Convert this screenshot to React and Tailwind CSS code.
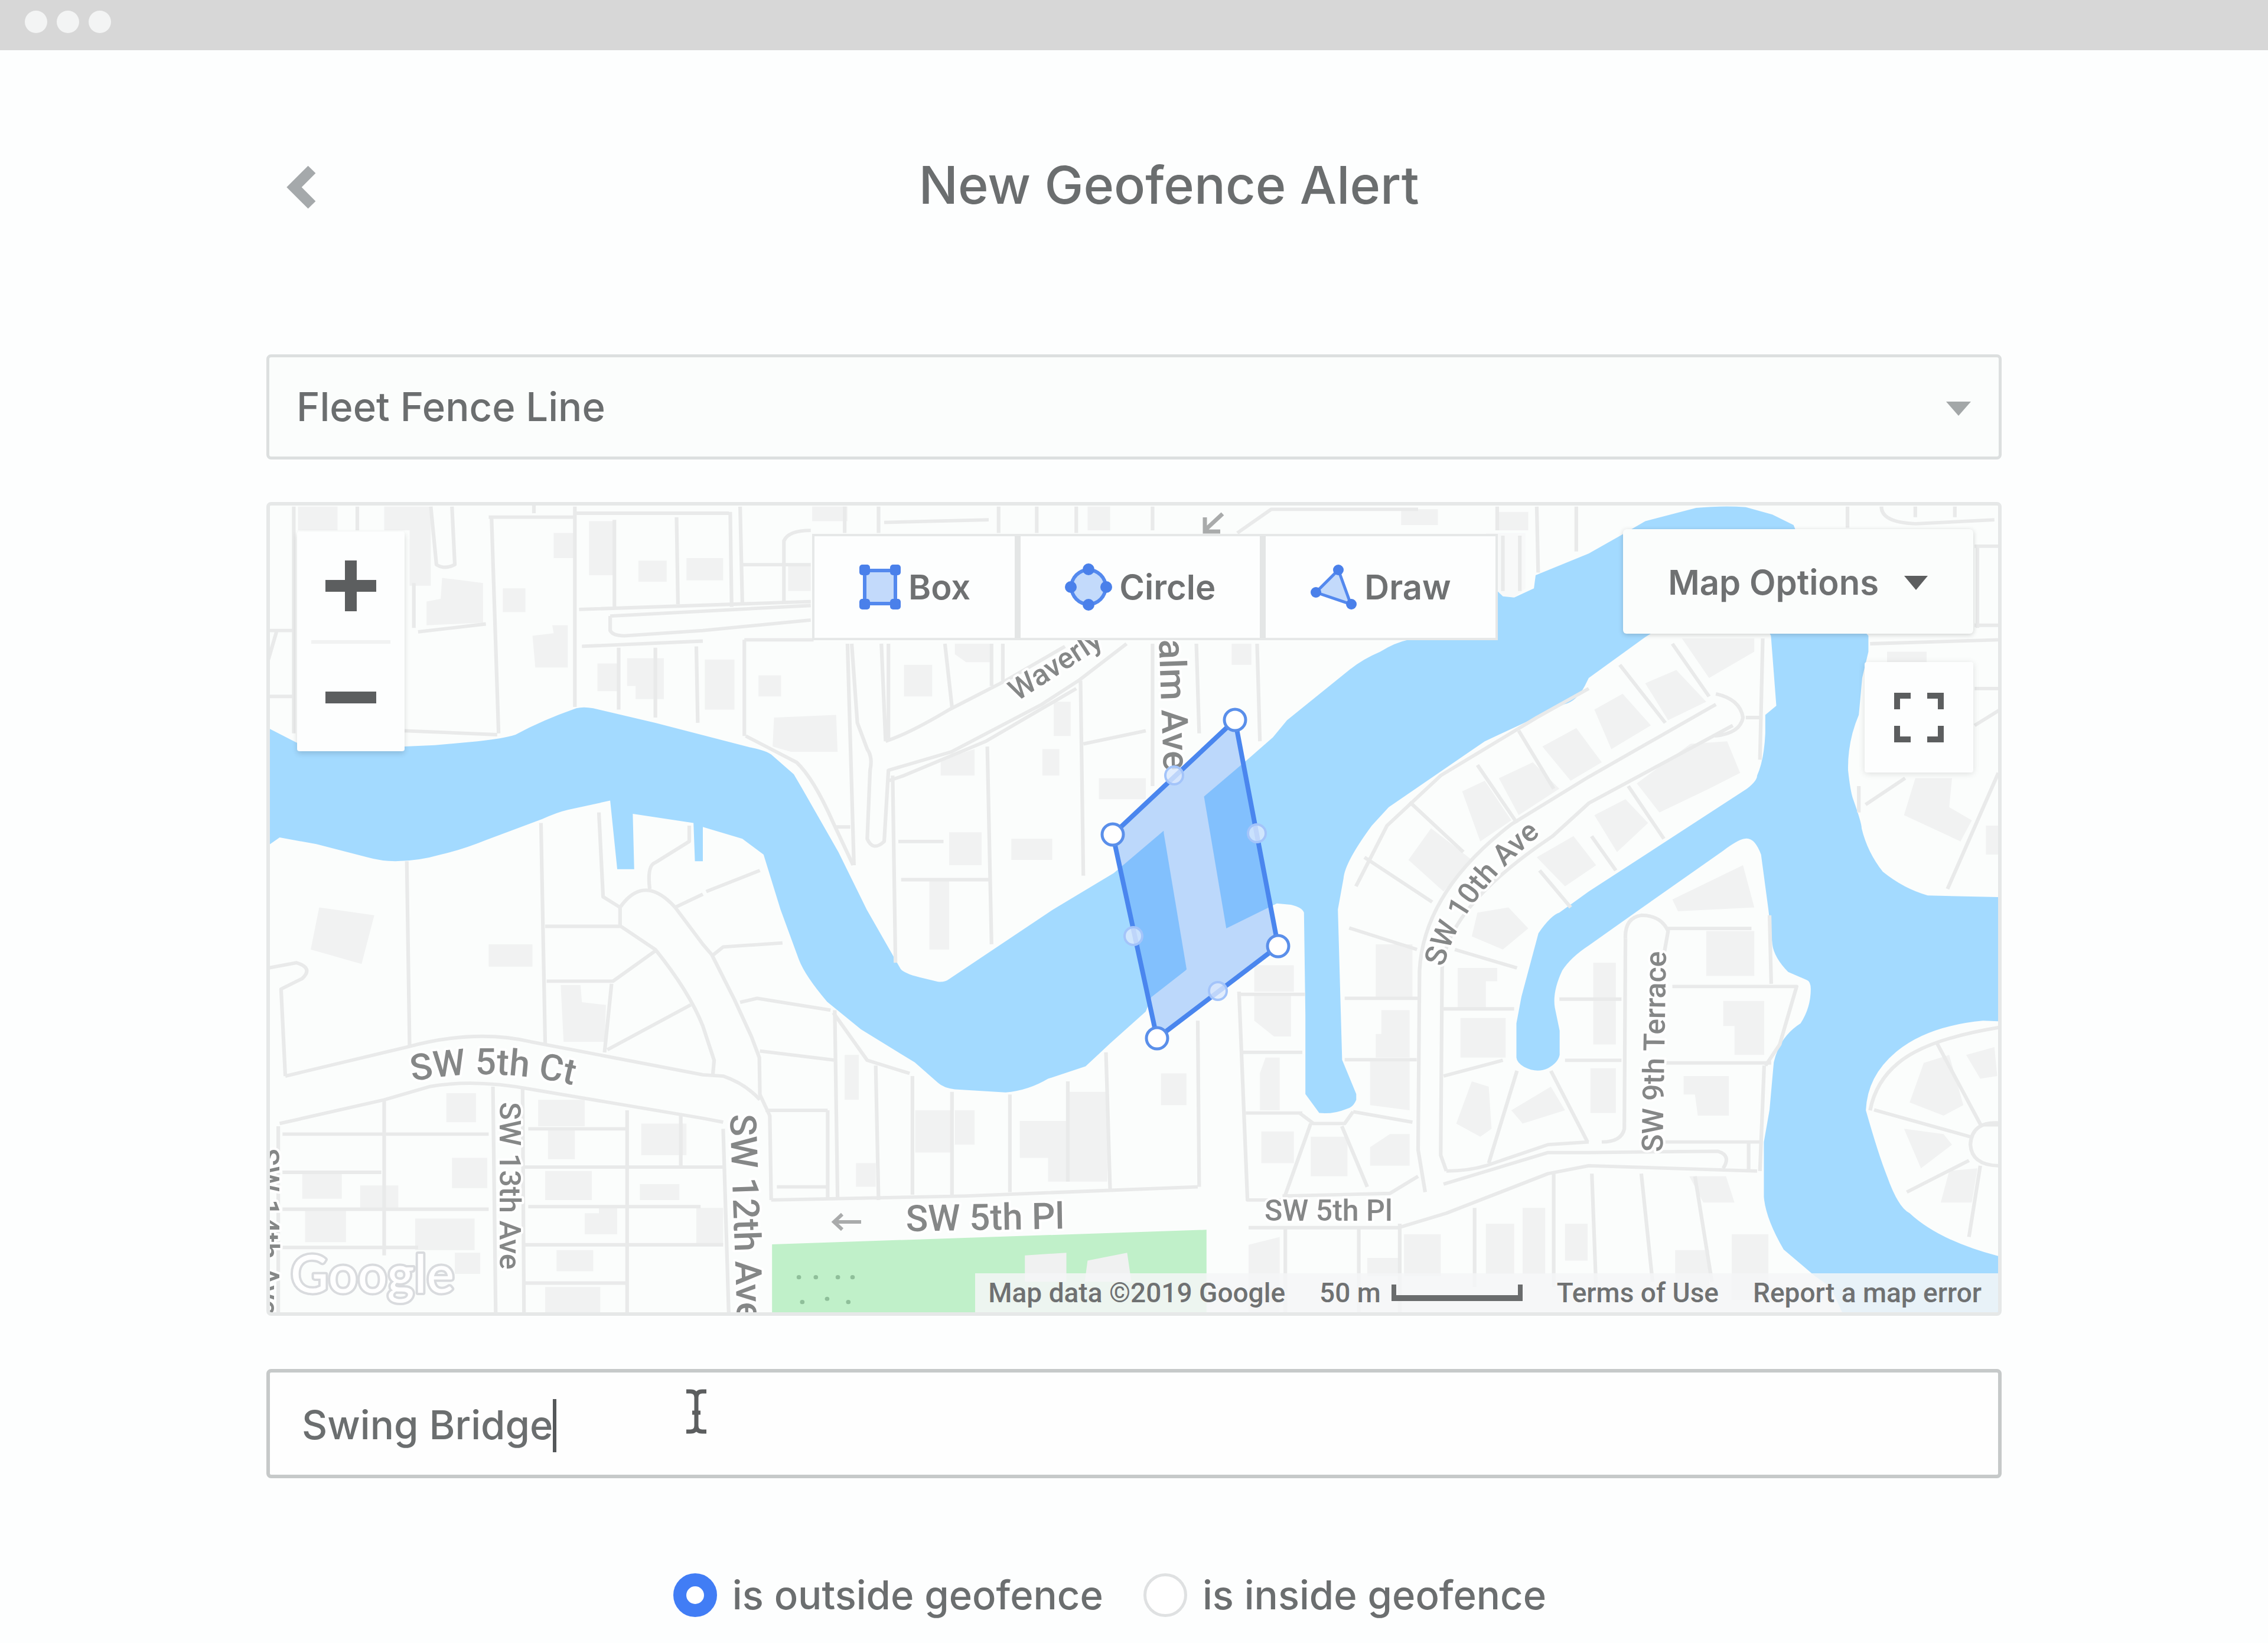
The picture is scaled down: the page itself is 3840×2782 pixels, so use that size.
import React from "react";

const WATER =
  "M0 870L30 880L130 935Q300 960 512 950L620 945L770 930Q860 920 905 905Q1000 850 1120 805Q1145 798 1180 805L1400 860L1743 955Q1790 965 1810 980L1890 1055L1920 1110L2048 1350L2148 1568L2268 1793Q2280 1810 2335 1825L2400 1842Q2425 1845 2440 1832L2808 1568L3023 1430L3506 990L3586 915L3636 850L3856 660Q3900 620 3966 590Q4020 555 4066 545L4250 440L4361 340L4400 380L4440 385L4510 350L4516 300L4704 218L4824 145L4904 95L5084 45Q5180 35 5260 42L5354 70L5429 110L5500 300L5694 530L5694 590L5672 690L5660 830Q5620 930 5622 1040Q5630 1120 5640 1150Q5670 1240 5670 1260Q5690 1350 5745 1425Q5820 1490 5904 1515L6180 1522V3140H5620L5560 3000L5504 2958L5394 2858Q5330 2740 5324 2658V2450L5344 2328L5359 2148Q5380 2050 5454 2000Q5490 1940 5490 1870Q5490 1840 5475 1835L5410 1805Q5360 1750 5354 1700L5340 1568L5314 1360Q5290 1290 5254 1300Q5230 1305 5180 1345L4884 1568L4704 1705Q4640 1750 4610 1800Q4575 1880 4584 1940L4601 2028V2120Q4595 2150 4560 2170Q4520 2190 4475 2165Q4450 2150 4448 2130V2000L4466 1898L4526 1658Q4570 1590 4600 1580L4704 1500L5264 1110Q5300 1080 5300 1060Q5325 1000 5329 900V830L5368 795L5349 530L5300 430L5000 470L4904 535L4704 690L4690 720Q4660 780 4616 790L4336 930L3996 1180L3936 1250Q3840 1390 3836 1450L3816 1568L3831 2138L3881 2268V2290Q3870 2320 3845 2325Q3800 2345 3750 2340L3701 2268V1968L3696 1580Q3690 1560 3650 1550L3600 1545L3421 1640L3276 1800L3156 1900L3136 1955L3008 2078L2923 2163L2790 2210Q2720 2255 2640 2262L2460 2250Q2420 2245 2400 2225L2318 2148L2128 2023L2008 1918Q1930 1820 1908 1758L1843 1568L1783 1360L1708 1300L1568 1255V1385H1540L1535 1240L1320 1205L1325 1415H1265L1240 1155L1090 1190Q1050 1200 1000 1225L800 1305Q720 1340 640 1360Q560 1385 480 1385Q430 1385 380 1370L200 1320L70 1295L30 1325L0 1350Z";

const ISLAND =
  "M6180 1993L6100 1990Q5900 2010 5790 2110Q5690 2200 5685 2330Q5730 2500 5760 2580Q5800 2700 5840 2720Q5950 2830 6180 2890Z";

const PARCELS = [
  // north-west blocks
  "M810 80H1110M820 80L845 900M1115 40V800M970 30V65M1115 65H1660M1255 90V420M1475 80L1480 410M1130 430L1950 400",
  "M1240 455L1950 415M1240 455V510Q1250 530 1290 530L1568 510L1950 470M1140 570L1568 550M1270 575V810M1400 575V840M1545 570L1550 860",
  "M512 890L840 905M605 40L625 260Q655 280 690 260L680 40M560 515L800 485M345 40V130M30 510H115M30 620L60 510M120 40V900M545 330V500M30 760H120",
  // south-west bank
  "M520 1385L530 2088M995 1240L1010 2080M1200 1200L1215 1520L1275 1560Q1360 1430 1470 1560M1380 1490Q1370 1400 1400 1390L1520 1310V1250M1470 1560L1568 1510",
  "M1275 1560V1630L1400 1720Q1520 1880 1568 2010L1608 2140L1603 2200M1470 1560L1568 1700L1600 1740L1680 1910L1740 2050L1768 2130L1770 2270L1805 2350L1810 2670",
  "M1010 1632H1275M1400 1725L1250 1840H1015M1245 1850L1220 2110M1525 1930L1230 2100M1605 1740L1640 1710L1850 1695M1700 1920L1760 1905L2020 1950M1770 2105L2040 2140M1790 2330H2010M1830 2620H2010M2035 1950L2045 2660M2010 2330V2660M1580 1500L1770 1420",
  "M90 2200L520 2090Q760 2020 960 2070L1568 2195L1640 2200Q1720 2230 1770 2290M70 2380L440 2290L600 2240Q760 2210 960 2250L1568 2360L1640 2375M90 2200L75 1870L150 1830Q190 1790 130 1770L30 1790M65 2390V3110",
  "M440 2290V2880M80 2420H810M80 2565H430M80 2705H810M80 2850H560M825 2240L835 3110M930 2240L935 3110M950 2400H1300M930 2545H1640M950 2695H1560M930 2840H1640M940 2985H1300M1300 2330V3110M1490 2350V2540M1640 2400L1660 3110",
  // Waverly
  "M1665 60L1670 420M1700 40L1708 410M1708 260H1950M1855 410V170Q1870 130 1950 130M2070 40V140M2190 40V140M2210 100L2580 90M2615 40V140M2750 40V140M2890 40V140M1715 545V910M1715 545H1960",
  "M2095 560L2115 860L2150 960Q2170 990 2160 1040L2150 1300Q2170 1350 2210 1310L2225 1040L2448 970L2768 790L2898 700L3068 560M2080 560L2103 1400M2200 560L2215 930M2225 560V920M2425 560L2450 800M2590 560V720M2630 560V700M2215 930Q2300 900 2440 810L2640 700L2850 570M2225 1080L2280 1060L2570 930L2890 730",
  "M2240 1060L2250 1770M2575 950L2590 1700M2905 700L2915 1440M2260 1310H2420M2270 1455H2590M2915 940L3136 890M1720 910L1900 1010Q1960 1070 2030 1240L2100 1400M2040 1255H2090",
  // south bank
  "M2180 2160L2190 2670M2310 2200V2650M2450 2260V2650M2655 2270V2640M2995 2110L3010 2640M2860 2220V2600M1810 2670L2500 2655L3320 2620M2030 1960L2150 2140L2300 2190",
  // Palm Ave
  "M3315 560L3325 900M3530 560L3540 930M3160 560V1100M3460 140L3580 50H4100M3160 40V130M4380 40V130M4520 40L4525 290M4660 40V210M4400 150V360M4460 150V360M3320 1990L3325 2620M3466 1880L3496 2670H3620",
  // SW 10th Ave
  "M5154 790L4704 1065L4430 1245Q4120 1500 4105 1800L4100 2480L4125 2640M5214 870L4704 1165L4576 1290Q4200 1560 4185 1790L4180 2500L4200 2560M5154 750Q5240 770 5250 840Q5240 900 5150 910",
  "M4456 890L4580 1110M4310 1020L4450 1240M4070 1160L4260 1350M3910 1370L4150 1540M3856 1638L4096 1720M3840 1905H4100M3840 2138H4095M3870 2335L4080 2375M3830 2390L3920 2620M3720 2380L3630 2650M3680 2340L3730 2380H3840L3870 2335M3690 2340H3490M3690 2110H3480M3700 1890H3470M3620 2655L4000 2645L4100 2580",
  "M4814 640L4975 860M5000 560L5130 760M4844 1100L4970 1300M4714 1290L4800 1420M4530 1420L4640 1560M5320 540L5310 1000M5260 840H5320M4704 730L4520 840L4180 1060L3990 1250L3880 1480",
  "M3500 2775H4030L4200 2720L4560 2570L4704 2540L5300 2560M4200 2560Q4280 2560 4340 2540L4560 2460L4704 2450M4190 2610L4560 2490H4704L5160 2485Q5210 2500 5180 2550M4450 2180L4350 2530M4570 2180L4700 2450M4190 2200L4400 2140M4190 1945H4440M4230 1720L4450 1790",
  "M3630 2780V3100M3890 2780V3100M4035 2760V3100M4300 2700V3000M4580 2570V3000M4715 2570L4730 3000M4890 2570L4930 2980M5080 2580L5140 2980",
  // SW 9th Terrace
  "M4834 1680L4830 2400Q4820 2450 4750 2450M4834 1680Q4830 1600 4890 1590Q4960 1590 4985 1650L4970 1740M4980 1640H5280M5344 1590L5350 1850M5000 1860H5440L5380 2080L5330 2160M4970 2150H5350M4960 2450H5320M5325 2160L5310 2560M5270 2450V2560M4600 1908H4820M4620 2140H4820",
  // east bank
  "M5974 1490L6154 1050M5684 1170L5824 1070M5660 1100V1200M5620 40V120M5740 40Q5740 100 5860 105L6140 90M5860 40V80M6000 40V80M6070 190H6160M6070 490H6160M6070 730H6160M5700 560L6160 545M6070 870L6160 810M6080 190V500",
  "M5714 2328L6054 2430M6094 2390L5934 2070M6094 2385H6160M6160 2378Q6060 2370 6055 2460Q6060 2540 6160 2540M5830 2640L6050 2520M6090 2540L6050 2810M6160 2015Q5900 2060 5800 2150Q5720 2220 5700 2330",
];

const BUILDINGS = [
  "M135 40H275V130H135Z", "M440 40H605V340H530V130H440Z", "M860 350H940V440H860Z", "M645 310L790 330V480L590 490V400L640 390Z",
  "M1040 140H1110V235H1040Z", "M1165 95H1250V300H1165Z", "M1340 245H1440V325H1340Z", "M1510 235H1640V320H1510Z",
  "M965 530L1040 520L1035 490H1090V650H975Z", "M1195 635H1270V740H1195Z", "M1300 615H1430V770H1330V720H1300Z",
  "M210 1560L405 1590L360 1775L180 1720Z", "M810 1700H965V1785H810Z", "M1065 1855H1135L1140 1920L1225 1930L1220 2070H1075Z",
  "M660 2265H765V2375H660Z", "M680 2510H805V2625H680Z", "M150 2565H290V2665H150Z", "M355 2615H490V2700H355Z",
  "M160 2710H305V2830H160Z", "M550 2740H760V2860H550Z", "M985 2290H1150V2390H985Z", "M1020 2400H1115V2515H1020Z",
  "M1010 2560H1175V2670H1010Z", "M1350 2380H1510V2500H1350Z", "M1345 2610H1485V2670H1345Z", "M1150 2720H1200V2690H1265V2800H1150Z",
  "M1050 2860H1180V2940H1050Z", "M1010 3000H1205V3100H1010Z", "M690 2870H780V2950H690Z", "M1545 2700H1640V2840H1545Z",
  "M1955 40H2080V95H1955Z", "M1870 265H1950V360H1870Z", "M1575 620H1680V810H1575Z", "M1765 680H1845V760H1765Z",
  "M1820 840L2040 830L2045 970H1880L1815 950Z", "M2280 640H2380V760H2280Z", "M2460 560H2590V630H2500L2460 600Z", "M2810 780H2870V910H2810Z",
  "M2770 960H2830V1060H2770Z", "M2410 1000L2530 960V1060H2410Z", "M2970 1070H3136V1150H2970Z", "M2440 1275H2555V1400H2440Z",
  "M2660 1300H2805V1380H2660Z", "M2370 1460H2440V1720H2370Z", "M2930 40H3010V130H2930Z",
  "M2070 2120H2120V2290H2070Z", "M2110 2530H2180V2620H2110Z", "M2320 2330H2450V2490H2320Z", "M2460 2330H2530V2460H2460Z",
  "M2690 2370H2860V2260H3000V2600H2790V2510H2690Z", "M3190 2190H3280V2310H3190Z",
  "M3440 560H3510V640H3440Z", "M4040 50H4170V110H4040Z", "M4380 60H4490V130H4380Z",
  "M5034 540H5290V590L5130 690Z", "M4904 710L5014 660L5120 780L4985 850Z", "M4724 810L4824 750L4924 870L4784 960Z",
  "M4540 950L4660 880L4750 1010L4640 1080Z", "M4386 1070L4506 1010L4600 1110L4456 1210Z", "M4256 1120L4336 1080L4430 1230L4320 1310Z",
  "M4066 1380L4146 1260L4290 1380L4190 1500Z", "M4874 1090L5064 940L5194 930L5240 1050L5130 1110L4954 1200Z",
  "M4724 1210L4834 1150L4914 1240L4804 1350Z", "M4520 1370L4650 1290L4730 1400L4620 1480Z", "M4310 1580L4420 1560L4490 1640L4400 1720L4290 1670Z",
  "M3520 1780H3660V1880H3520Z", "M3520 1890H3650V2050H3590L3520 1990Z", "M3950 1700H4080V1900H3950Z", "M3970 1950H4070V2130H3950V2040H3970Z",
  "M3930 2140H4070V2330L3930 2310Z", "M4240 1790H4380V1840H4340V1940H4240Z", "M4250 1980H4410V2130H4250Z", "M3540 2190L3560 2130H3610V2330H3540Z",
  "M3545 2410H3660V2530H3545Z", "M3720 2430H3850V2580H3720Z", "M3930 2470L4000 2420H4070V2540H3930Z",
  "M4290 2220L4350 2240L4360 2400L4320 2430L4235 2380Z", "M4430 2330L4570 2240L4620 2330L4470 2380Z",
  "M3500 2840L3610 2810V3100H3500Z", "M3920 2890H4040V2960H3920Z", "M4050 2800H4180V2960H4050Z", "M4340 2760H4440V2950H4340Z",
  "M4470 2700H4550V2950H4470Z", "M4620 2760H4700V2900H4620Z", "M5120 1650H5290V1820H5120Z", "M5180 1915H5325V2120H5220V2010H5180Z",
  "M5040 2200H5200V2350H5090L5080 2270H5040Z", "M5060 2580H5190L5220 2680H5110Z", "M5010 2860H5130V3050H5010Z", "M5210 2800H5340V3050H5210Z",
  "M4720 1770H4800V2080H4720Z", "M4710 2170H4800V2340H4710Z", "M5000 1530L5250 1400L5290 1560L5020 1575Z",
  "M5860 1070H5990L5980 1180L6060 1230L6020 1310L5820 1210Z", "M6110 1250H6160V1360H6110Z", "M5760 590H5900V640H5760Z",
  "M5890 2150L5980 2120L6030 2310L5960 2350L5840 2300Z", "M5820 2400L5960 2420L5990 2460L5880 2550Z",
  "M5980 2560L6080 2550L6060 2680H5950Z", "M6040 2120L6140 2090L6150 2200L6090 2210Z",
];

const TREES = [[340, 2963], [400, 2963], [478, 2963], [530, 2963], [352, 3057], [440, 3045], [515, 3057]];

const CORNERS = [[2091, 1219], [1884, 1413], [1959, 1758], [2164, 1602]];
const MIDPOINTS = [[1988, 1313], [1919, 1585], [2062, 1678], [2128, 1411]];

function MapCanvas() {
  return (
    <svg viewBox="457 856 2926 1366" className="block h-auto w-full" role="img" aria-label="Map with geofence">
      <defs>
        <path id="fifth-court" d="M698 1831Q840 1803 985 1841" />
        <path id="tenth-avenue" d="M2444 1638C2465 1560 2512 1492 2614 1408" />
      </defs>
      <rect x="440" y="840" width="2960" height="1400" fill="#fbfdfc" />
      <g transform="translate(440 840) scale(.4783 .4464)">
        {BUILDINGS.map((d) => (
          <path key={d} d={d} fill="#f1f2f2" />
        ))}
        <path d="M4340 140H4480V350L4440 385H4400L4360 340Z" fill="#f8f9f9" />
        <path d={WATER} fill="#a3daff" />
        <path d={ISLAND} fill="#fbfdfc" />
        {BUILDINGS.slice(-4).map((d) => (
          <path key={d} d={d} fill="#f1f2f2" />
        ))}
        <path d="M3180 1000H3320L3421 1640V1800L3286 1830L3200 1280Z" fill="#fbfdfc" />
        {PARCELS.map((d) => (
          <path key={d} d={d} fill="none" stroke="#e9eaea" strokeWidth="13" strokeLinejoin="round" />
        ))}
        <path d="M1813 2838L3351 2783V3130H1813Z" fill="#c0f0c9" />
        <path d="M2708 2880L2855 2870V2980H2708ZM2930 2900L3070 2870L3085 2980H2920Z" fill="#f0f1f1" />
        {TREES.map(([x, y]) => (
          <circle key={`${x}-${y}`} cx={x + 1568} cy={y} r="8" fill="#8fbf9a" />
        ))}
      </g>

      <g fill="none" stroke="#a9abab" strokeWidth="6">
        <path d="M1458 2069H1412M1426 2056L1412 2069L1426 2082" />
        <path d="M2070 870L2042 896M2040 876V900H2066" strokeWidth="7" />
      </g>

      <g fill="#858787" stroke="#fff" strokeWidth="8" strokeLinejoin="round" paintOrder="stroke" fontFamily="Roboto, sans-serif" fontSize="50">
        <text fontSize="62"><textPath href="#fifth-court">SW 5th Ct</textPath></text>
        <text transform="translate(846 1866) rotate(90)">SW 13th Ave</text>
        <text transform="translate(437 1944) rotate(90)">SW 14th Ave</text>
        <text transform="translate(1236 1887) rotate(88)" fontSize="62">SW 12th Ave</text>
        <text transform="translate(1534 2085) rotate(-1)" fontSize="62">SW 5th Pl</text>
        <text transform="translate(2141 2067)">SW 5th Pl</text>
        <text transform="translate(1722 1188) rotate(-33)">Waverly</text>
        <text transform="translate(1961 1044) rotate(88)" fontSize="62">Palm Ave</text>
        <text><textPath href="#tenth-avenue">SW 10th Ave</textPath></text>
        <text transform="translate(2815 1951) rotate(-89)">SW 9th Terrace</text>
      </g>
      <text x="492" y="2189" fill="#fff" stroke="#d9dbde" strokeWidth="8" strokeLinejoin="round" paintOrder="stroke" fontFamily="Lato, sans-serif" fontSize="88">Google</text>

      <polygon points={CORNERS.map((p) => p.join(",")).join(" ")} fill="#4390fa" fillOpacity=".34" stroke="#4a86ee" strokeWidth="8" />
      {MIDPOINTS.map(([x, y]) => (
        <circle key={x} cx={x} cy={y} r="15" fill="#dbe8fd" fillOpacity=".8" stroke="#a3c4fa" strokeWidth="4" />
      ))}
      {CORNERS.map(([x, y]) => (
        <circle key={x} cx={x} cy={y} r="18" fill="#fff" stroke="#5a8fea" strokeWidth="5" />
      ))}
    </svg>
  );
}

function BoxIcon() {
  return (
    <svg viewBox="0 0 72 78" className="h-[78px] w-[72px]" aria-hidden="true">
      <rect x="10" y="11" width="52" height="56" fill="#c3dafb" stroke="#5489ee" strokeWidth="6" />
      <g fill="#4a80ea">
        <rect x="1" y="1" width="18" height="18" rx="5" />
        <rect x="53" y="1" width="18" height="18" rx="5" />
        <rect x="1" y="59" width="18" height="18" rx="5" />
        <rect x="53" y="59" width="18" height="18" rx="5" />
      </g>
    </svg>
  );
}

function CircleIcon() {
  return (
    <svg viewBox="0 0 80 80" className="size-[80px]" aria-hidden="true">
      <circle cx="40" cy="40" r="29" fill="#c3dafb" stroke="#5489ee" strokeWidth="6" />
      <g fill="#4a80ea">
        <circle cx="40" cy="10" r="10" />
        <circle cx="70" cy="40" r="10" />
        <circle cx="40" cy="70" r="10" />
        <circle cx="10" cy="40" r="10" />
      </g>
    </svg>
  );
}

function DrawIcon() {
  return (
    <svg viewBox="0 0 80 78" className="h-[78px] w-[80px]" aria-hidden="true">
      <path d="M48 10L10 48L69 68Z" fill="#c3dafb" stroke="#5489ee" strokeWidth="5" />
      <g fill="#4a80ea">
        <circle cx="48" cy="10" r="9" />
        <circle cx="10" cy="48" r="9" />
        <circle cx="70" cy="68" r="9" />
      </g>
    </svg>
  );
}

const TOOLS = [
  { label: "Box", Icon: BoxIcon },
  { label: "Circle", Icon: CircleIcon },
  { label: "Draw", Icon: DrawIcon },
];

function MapPanel() {
  return (
    <section className="relative mt-[72px] overflow-hidden rounded-[8px] border-[6px] border-[#e6e8e8]">
      <MapCanvas />

      <div className="absolute top-[44px] left-[46px] flex w-[182px] flex-col items-center rounded-[4px] bg-[#fdfefe] shadow-[0_4px_10px_rgba(0,0,0,0.14)]">
        <button type="button" aria-label="Zoom in" className="flex h-[184px] w-full items-center justify-center">
          <svg viewBox="0 0 86 86" className="size-[86px]" aria-hidden="true">
            <path d="M43 0V86M0 43H86" stroke="#5c5e5f" strokeWidth="20" />
          </svg>
        </button>
        <div className="h-[6px] w-[134px] bg-[#f1f2f2]" />
        <button type="button" aria-label="Zoom out" className="flex h-[182px] w-full items-center justify-center">
          <svg viewBox="0 0 86 86" className="size-[86px]" aria-hidden="true">
            <path d="M0 43H86" stroke="#5c5e5f" strokeWidth="20" />
          </svg>
        </button>
      </div>

      <div className="absolute top-[48px] left-[918px] flex gap-[10px] border-[4px] border-[#e6e8e8] bg-[#e4e6e6]">
        {TOOLS.map(({ label, Icon }) => (
          <button key={label} type="button" className="flex h-[172px] items-center gap-[12px] bg-[#fdfefe] px-[75px] text-[58px] font-semibold text-[#6f7172]">
            <Icon />
            {label}
          </button>
        ))}
      </div>

      <div className="absolute top-[40px] right-[42px] flex flex-col items-end gap-[48px]">
        <button type="button" className="flex h-[177px] items-center gap-[42px] rounded-[6px] bg-[#fbfdfc] px-[76px] pt-[4px] text-[58px] font-semibold text-[#6f7172] shadow-[0_2px_8px_rgba(0,0,0,0.18)]">
          Map Options
          <svg viewBox="0 0 42 24" className="h-[24px] w-[42px]" aria-hidden="true">
            <path d="M1 0H41L21 24Z" fill="#5c5e5f" />
          </svg>
        </button>
        <button type="button" aria-label="Full screen" className="flex h-[187px] w-[184px] items-center justify-center rounded-[4px] bg-[#fdfefe] shadow-[0_2px_12px_rgba(0,0,0,0.12)]">
          <svg viewBox="0 0 84 84" className="size-[84px]" fill="none" stroke="#5c5e5f" strokeWidth="10" aria-hidden="true">
            <path d="M5 28V5H28M56 5H79V28M79 56V79H56M28 79H5V56" />
          </svg>
        </button>
      </div>

      <footer className="absolute right-0 bottom-0 flex h-[66px] items-center gap-[58px] bg-[#f5f6f7]/85 pr-[28px] pl-[22px] font-[Roboto,sans-serif] text-[46px] leading-[66px] whitespace-nowrap text-[#6f7172]">
        <span>Map data ©2019 Google</span>
        <span className="flex items-center gap-[18px]">
          50 m
          <span className="h-[28px] w-[222px] border-x-[8px] border-b-[10px] border-[#6a6c6d]" />
        </span>
        <a href="#terms">Terms of Use</a>
        <a href="#report">Report a map error</a>
      </footer>
    </section>
  );
}

function RadioOption({ label, defaultChecked }) {
  return (
    <label className="flex items-center gap-[26px]">
      <input
        type="radio"
        name="trigger"
        defaultChecked={defaultChecked}
        className="size-[74px] appearance-none rounded-full border-[5px] border-[#dfe1e2] bg-white checked:border-[22px] checked:border-[#417df5]"
      />
      {label}
    </label>
  );
}

export default function App() {
  return (
    <div className="min-h-screen bg-[#fdfefe] pb-[44px] font-[Inter,sans-serif] text-[67px] font-medium text-[#6b6e6f]">
      <div className="flex h-[85px] gap-[16px] bg-[#d7d7d7] pt-[18px] pl-[42px]">
        <span className="size-[38px] rounded-full bg-[#f3f4f4]" />
        <span className="size-[38px] rounded-full bg-[#f3f4f4]" />
        <span className="size-[38px] rounded-full bg-[#f3f4f4]" />
      </div>

      <main className="mx-auto w-full max-w-[2938px] pt-[168px]">
        <header className="flex items-center">
          <button type="button" aria-label="Back" className="w-[118px] pt-[8px] pl-[34px]">
            <svg viewBox="0 0 52 78" className="h-[78px] w-[52px]" aria-hidden="true">
              <path d="M43 9L13 39L43 69" fill="none" stroke="#a5a9ab" strokeWidth="18" />
            </svg>
          </button>
          <h1 className="flex-1 text-center text-[88px] leading-[120px] font-medium">New Geofence Alert</h1>
        </header>

        <div className="relative mt-[227px]">
          <select aria-label="Fence type" className="block h-[178px] w-full appearance-none rounded-[8px] border-[5px] border-[#dcdfdf] bg-[#fbfdfc] pl-[46px]">
            <option>Fleet Fence Line</option>
          </select>
          <svg viewBox="0 0 42 24" className="pointer-events-none absolute top-[80px] right-[52px] h-[24px] w-[42px]" aria-hidden="true">
            <path d="M0 0H42L21 24Z" fill="#a3a7a8" />
          </svg>
        </div>

        <MapPanel />

        <div className="relative mt-[90px] flex h-[185px] items-center rounded-[8px] border-[6px] border-[#c6c9c9] bg-[#fefefe] pt-[6px] pl-[54px]">
          <input aria-label="Fence name" defaultValue="Swing Bridge" className="[field-sizing:content] bg-transparent outline-none" />
          <span className="h-[90px] w-[6px] bg-[#55585a]" />
          <svg viewBox="0 0 36 76" className="pointer-events-none absolute top-[28px] left-[704px] h-[76px] w-[36px]" fill="none" stroke="#5c5e5f" strokeWidth="7" aria-hidden="true">
            <path d="M1 4H8Q18 4 18 14V62Q18 72 8 72H1M35 4H28Q18 4 18 14M18 62Q18 72 28 72H35M11 40H25" />
          </svg>
        </div>

        <div role="radiogroup" aria-label="Trigger" className="mt-[158px] flex justify-center gap-[68px] pr-[82px] leading-[80px]">
          <RadioOption label="is outside geofence" defaultChecked />
          <RadioOption label="is inside geofence" />
        </div>
      </main>
    </div>
  );
}
